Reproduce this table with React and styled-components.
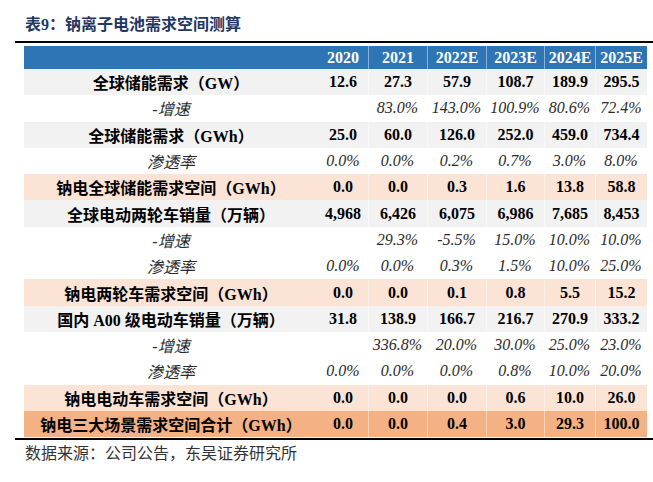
import React from 'react'
import styled, { createGlobalStyle } from 'styled-components'

const GlobalStyle = createGlobalStyle`
  body {
    margin: 0;
    background: #fff;
    font-family: "Liberation Serif", "Noto Sans CJK SC", serif;
  }
`

const Page = styled.div`
  width: 638px;
  margin-left: 15px;
`

const Title = styled.div`
  padding: 15px 0 0 10px;
  height: 20px;
  line-height: 20px;
  font-size: 16px;
  font-weight: 700;
  color: #1f3864;
  margin-bottom: 6px;
`

const Rule = styled.div`
  height: 2px;
  background: #000;
  margin-top: ${props => props.$gap || 0}px;
`

const Table = styled.div`
  margin: 3px 0 0 9px;
  width: 623px;
`

const cols = '294px 50px 59px 59px 58px 51px 52px'

const bg = {
  header: '#2e75b6',
  main: '#f2f2f2',
  italic: '#ffffff',
  pink: '#fbe4d5',
  orange: '#f4b183'
}

const Row = styled.div`
  display: grid;
  grid-template-columns: ${cols};
  height: ${props => (props.$kind === 'header' ? 23 : 26.3)}px;
  background: ${props => bg[props.$kind]};
  color: ${props => (props.$kind === 'header' ? '#fff' : props.$kind === 'italic' ? '#2b2b2b' : '#000')};
  font-style: ${props => (props.$kind === 'italic' ? 'italic' : 'normal')};
  font-weight: ${props => (props.$kind === 'italic' ? 400 : 700)};
  font-size: 16px;
`

const Cell = styled.div`
  display: flex;
  align-items: center;
  justify-content: center;
  white-space: nowrap;
  border-left: ${props => (props.$sep ? '1px solid rgba(255,255,255,0.45)' : 'none')};
`

const Footer = styled.div`
  margin: 4px 0 0 10px;
  line-height: 20px;
  font-size: 16px;
  color: #333;
`

const header = ['', '2020', '2021', '2022E', '2023E', '2024E', '2025E']

const rows = [
  ['main', '全球储能需求（GW）', '12.6', '27.3', '57.9', '108.7', '189.9', '295.5'],
  ['italic', '-增速', '', '83.0%', '143.0%', '100.9%', '80.6%', '72.4%'],
  ['main', '全球储能需求（GWh）', '25.0', '60.0', '126.0', '252.0', '459.0', '734.4'],
  ['italic', '渗透率', '0.0%', '0.0%', '0.2%', '0.7%', '3.0%', '8.0%'],
  ['pink', '钠电全球储能需求空间（GWh）', '0.0', '0.0', '0.3', '1.6', '13.8', '58.8'],
  ['main', '全球电动两轮车销量（万辆）', '4,968', '6,426', '6,075', '6,986', '7,685', '8,453'],
  ['italic', '-增速', '', '29.3%', '-5.5%', '15.0%', '10.0%', '10.0%'],
  ['italic', '渗透率', '0.0%', '0.0%', '0.3%', '1.5%', '10.0%', '25.0%'],
  ['pink', '钠电两轮车需求空间（GWh）', '0.0', '0.0', '0.1', '0.8', '5.5', '15.2'],
  ['main', '国内 A00 级电动车销量（万辆）', '31.8', '138.9', '166.7', '216.7', '270.9', '333.2'],
  ['italic', '-增速', '', '336.8%', '20.0%', '30.0%', '25.0%', '23.0%'],
  ['italic', '渗透率', '0.0%', '0.0%', '0.0%', '0.8%', '10.0%', '20.0%'],
  ['pink', '钠电电动车需求空间（GWh）', '0.0', '0.0', '0.0', '0.6', '10.0', '26.0'],
  ['orange', '钠电三大场景需求空间合计（GWh）', '0.0', '0.0', '0.4', '3.0', '29.3', '100.0']
]

export default function App() {
  return (
    <Page>
      <GlobalStyle />
      <Title>表9：钠离子电池需求空间测算</Title>
      <Rule />
      <Table>
        <Row $kind="header">
          {header.map((h, i) => (
            <Cell key={i} $sep={i > 1}>{h}</Cell>
          ))}
        </Row>
        {rows.map((r, ri) => (
          <Row key={ri} $kind={r[0]}>
            {r.slice(1).map((v, i) => (
              <Cell key={i} $sep={i > 1 && r[0] !== 'italic'}>{v}</Cell>
            ))}
          </Row>
        ))}
      </Table>
      <Rule $gap={1} />
      <Footer>数据来源：公司公告，东吴证券研究所</Footer>
    </Page>
  )
}
